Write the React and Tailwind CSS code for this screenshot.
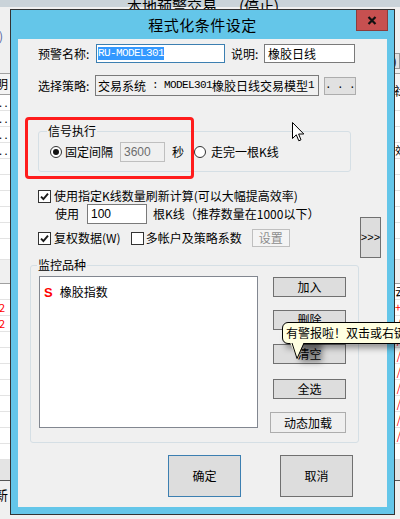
const Check = ({ checked }) => (
  <span className="w-[13px] h-[13px] border border-[#333333] bg-white flex items-center justify-center shrink-0">
    {checked && (
      <svg width="9" height="9" viewBox="0 0 9 9">
        <path d="M1 4.6 L3.4 7 L8 1.6" stroke="#1a1a1a" strokeWidth="1.9" fill="none" />
      </svg>
    )}
  </span>
);

const Radio = ({ checked }) => (
  <span className="w-[12px] h-[12px] rounded-full border border-[#333333] bg-white flex items-center justify-center shrink-0">
    {checked && <span className="w-[6px] h-[6px] rounded-full bg-[#111111]" />}
  </span>
);

const Btn = ({ children, className }) => (
  <div className={`flex items-center justify-center bg-[#dddddd] border leading-none ${className}`}>{children}</div>
);

const mono = "font-['Liberation_Mono',monospace] text-[11px] tracking-[-0.6px]";

const BgRow = ({ left, right, leftClass = '', rightClass = '', h = 'h-[16px]' }) => (
  <div className={`${h} border-b border-[#e3e3e3] bg-white flex justify-between items-center text-[11px] leading-none`}>
    <span className={`-ml-[1px] ${leftClass}`}>{left}</span>
    <span className={`-mr-[1px] ${rightClass}`}>{right}</span>
  </div>
);

export default function App() {
  return (
    <div className="w-[400px] h-[519px] relative overflow-hidden bg-[#f0f0f0] font-['Noto_Sans_CJK_SC',sans-serif] text-[12px] text-black">
      {/* background application */}
      <div className="h-[9px] bg-[#cad3d9] overflow-visible">
        <div className="pl-[127px] text-[15px] leading-[15px] -mt-[2px] whitespace-nowrap flex">
          <span>本地预警交易</span>
          <span className="ml-[22px]">(停止)</span>
        </div>
      </div>
      <div className="h-[66px] flex justify-between items-start">
        <span className="mt-[20px] text-[12px] text-[#5264a3] -ml-[1px]">)</span>
        <span className="mt-[46px] w-[8px] h-[16px] border border-[#9a9a9a] bg-[#e1e1e1] text-[11px] leading-[14px]">)</span>
      </div>
      <div className="h-[22px] border-t border-b border-[#a0a0a0] bg-[#f4f4f4] flex justify-between items-center">
        <span className="-ml-[4px]">明</span>
        <span className="-mr-[6px] mt-[14px]">社</span>
      </div>
      <BgRow left=". ." right="" />
      <BgRow left=". ." right="" />
      <BgRow left=". ." right="" />
      <BgRow left=". ." right="效" rightClass="-mr-[6px]" />
      <BgRow left="" right="" />
      <BgRow left="" right="" />
      <BgRow left="" right="" />
      <BgRow left="" right="" />
      <BgRow left="" right="" />
      <BgRow left="" right="" h="h-[21px]" />
      <div className="h-[24px] bg-[#f0f0f0] border-b border-[#a0a0a0]" />
      <BgRow left="" right="云" rightClass="-mr-[6px]" />
      <BgRow left="2" leftClass="text-[#ff0000]" right="+" rightClass="text-[#ff0000]" />
      <BgRow left="2" leftClass="text-[#ff0000]" right="/" rightClass="text-[#ff0000]" />
      <BgRow left="" right="/" rightClass="text-[#ff0000]" />
      <BgRow left="" right="/" rightClass="text-[#ff0000]" />
      <BgRow left="" right="/" rightClass="text-[#ff0000]" />
      <BgRow left="" right="/" rightClass="text-[#ff0000]" />
      <BgRow left="" right="/" rightClass="text-[#ff0000]" />
      <BgRow left="" right="/" rightClass="text-[#ff0000]" />
      <BgRow left="" right="/" rightClass="text-[#ff0000]" />
      <BgRow left="" right="" />
      <div className="h-[21px] bg-[#e4e4e4] border-b border-[#555555]" />
      <div className="h-[28px] flex items-center">
        <span className="-ml-[5px] text-[13px]">新</span>
      </div>

      {/* dialog window */}
      <div className="absolute left-[10px] top-[9px] w-[385px] h-[506px] border border-[#333333] bg-[#64c6e9] flex flex-col px-[7px] pb-[7px]">
        <div className="relative h-[29px] shrink-0 flex items-center justify-center -mx-[7px]">
          <span className="text-[15px] leading-none tracking-[0.5px]">程式化条件设定</span>
          <div className="absolute top-0 right-[6px] w-[32px] h-[21px] bg-[#c75050] border border-[#8c3c3c] border-t-0 flex items-center justify-center">
            <svg width="10" height="9" viewBox="0 0 10 9">
              <path d="M1.5 1 L8.5 8 M8.5 1 L1.5 8" stroke="#111" strokeWidth="2.2" />
            </svg>
          </div>
        </div>

        <div className="relative flex-1 bg-[#f0f0f0] flex flex-col">
          {/* row 1 */}
          <div className="flex items-center h-[19px] mt-[5px] pl-[20px] leading-none">
            <span className="w-[58px]">预警名称:</span>
            <div className="w-[129px] h-[19px] border border-[#3c7fb1] bg-white flex items-center pl-[1px]">
              <span className={`bg-[#3399ff] text-white h-[13px] leading-[13px] ${mono}`}>RU-MODEL301</span>
            </div>
            <span className="ml-[6px] w-[33px]">说明:</span>
            <div className="w-[91px] h-[19px] border border-[#7a7a7a] bg-white flex items-center pl-[3px]">橡胶日线</div>
          </div>

          {/* row 2 */}
          <div className="flex items-center h-[21px] mt-[12px] pl-[20px] leading-none">
            <span className="w-[57px]">选择策略:</span>
            <div className="w-[224px] h-[21px] border border-[#7a7a7a] bg-[#f0f0f0] flex items-center pl-[2px] whitespace-nowrap">
              <span>交易系统</span>
              <span className={mono}>&nbsp;:&nbsp;MODEL301</span>
              <span>橡胶日线交易模型</span>
              <span className={mono}>1</span>
            </div>
            <Btn className="ml-[5px] w-[32px] h-[18px] border-[#adadad] bg-[#e1e1e1]">
              <span className={mono}>. . .</span>
            </Btn>
          </div>

          {/* group: 信号执行 */}
          <div className="relative mt-[35px] ml-[20px] w-[313px] h-[41px] border border-[#d5dfe5] rounded-[3px] shrink-0">
            <span className="absolute left-[8px] -top-[8px] px-[1px] bg-[#f0f0f0] leading-[14px]">信号执行</span>
            <div className="flex items-center h-[20px] mt-[10px] pl-[11px] leading-none">
              <Radio checked />
              <span className="ml-[3px]">固定间隔</span>
              <div className="ml-[7px] w-[45px] h-[20px] border border-[#bfbfbf] bg-[#f0f0f0] flex items-center pl-[3px] font-['Liberation_Sans',sans-serif] text-[#6d6d6d]">3600</div>
              <span className="ml-[7px]">秒</span>
              <span className="ml-[10px]"><Radio /></span>
              <span className="ml-[5px]">走完一根K线</span>
            </div>
          </div>

          {/* check rows + >>> */}
          <div className="flex mt-[16px] h-[70px] shrink-0">
            <div className="flex-1 flex flex-col pl-[20px] leading-none">
              <div className="flex items-center h-[16px]">
                <Check checked />
                <span className="ml-[3px] whitespace-nowrap">使用指定K线数量刷新计算(可以大幅提高效率)</span>
              </div>
              <div className="flex items-center h-[20px] pl-[17px]">
                <span>使用</span>
                <div className="ml-[8px] w-[60px] h-[20px] border border-[#7a7a7a] bg-white flex items-center pl-[3px] font-['Liberation_Sans',sans-serif]">100</div>
                <span className="ml-[6px] whitespace-nowrap">根K线（推荐数量在1000以下）</span>
              </div>
              <div className="flex items-center h-[18px] mt-[5px]">
                <Check checked />
                <span className="ml-[3px]">复权数据(W)</span>
                <span className="ml-[10px]"><Check /></span>
                <span className="ml-[2px]">多帐户及策略系数</span>
                <Btn className="ml-[10px] w-[38px] h-[18px] border-[#bfbfbf] bg-[#f4f4f4] text-[#8d8d8d]">设置</Btn>
              </div>
            </div>
            <Btn className="mt-[29px] mr-[6px] w-[21px] h-[41px] border-[#707070] text-[11px] font-['Liberation_Sans',sans-serif]">&gt;&gt;&gt;</Btn>
          </div>

          {/* group: 监控品种 */}
          <div className="relative mt-[7px] ml-[12px] w-[329px] h-[178px] border border-[#d5dfe5] rounded-[3px] flex shrink-0">
            <span className="absolute left-[6px] -top-[8px] px-[1px] bg-[#f0f0f0] leading-[14px]">监控品种</span>
            <div className="ml-[8px] mt-[10px] w-[219px] h-[152px] border border-[#828790] bg-white pl-[4px] pt-[7px]">
              <div className="flex items-center h-[16px] leading-none">
                <span className="text-[#ff0000] font-bold font-['Liberation_Sans',sans-serif] text-[13px]">S</span>
                <span className="ml-[7px]">橡胶指数</span>
              </div>
            </div>
            <div className="ml-[15px] flex flex-col">
              <Btn className="mt-[11px] w-[73px] h-[20px] border-[#707070]">加入</Btn>
              <Btn className="mt-[13px] w-[73px] h-[20px] border-[#707070]">删除</Btn>
              <Btn className="mt-[14px] w-[73px] h-[20px] border-[#707070]">清空</Btn>
              <Btn className="mt-[15px] w-[73px] h-[20px] border-[#707070]">全选</Btn>
              <Btn className="mt-[13px] -ml-[3px] w-[76px] h-[21px] border-[#adadad] bg-[#efefef]">动态加载</Btn>
            </div>
          </div>

          {/* bottom buttons */}
          <div className="flex mt-[12px]">
            <Btn className="ml-[150px] w-[73px] h-[42px] border-[#3c7fb1]">确定</Btn>
            <Btn className="ml-[39px] w-[73px] h-[42px] border-[#707070]">取消</Btn>
          </div>

          {/* red annotation */}
          <div className="absolute left-[7px] top-[78px] w-[169px] h-[62px] border-[3px] border-[#ff1c1c] rounded-[4px]" />
        </div>
      </div>

      {/* balloon tooltip */}
      <div className="absolute left-[300px] top-[340px] w-[22px] h-[22px] bg-[#000000]/40 blur-[3px]" />
      <div className="absolute left-[286px] top-[338px] w-[130px] h-[10px] bg-[#000000]/40 blur-[3px]" />
      <div className="absolute left-[282px] top-[322px] w-[140px] h-[22px] border border-black rounded-l-[6px] bg-[#ffffe1] flex items-center pl-[3px] leading-none whitespace-nowrap">
        有警报啦！双击或右键查看
      </div>
      <svg className="absolute left-[288px] top-[342px]" width="20" height="18" viewBox="0 0 20 18">
        <polygon points="2,0.5 16,0.5 9,16.5" fill="#ffffe1" stroke="none" />
        <path d="M4 1 L9 16.5 L16 1" stroke="#000" strokeWidth="1" fill="none" />
      </svg>

      {/* mouse cursor */}
      <svg className="absolute left-[292px] top-[122px]" width="13" height="21" viewBox="0 0 13 21">
        <path d="M0.5 0.5 L0.5 16.5 L4.3 12.8 L6.8 18.8 L9 17.8 L6.6 12 L11.8 12 Z" fill="#ffffff" stroke="#000000" strokeWidth="1" />
      </svg>
    </div>
  );
}
